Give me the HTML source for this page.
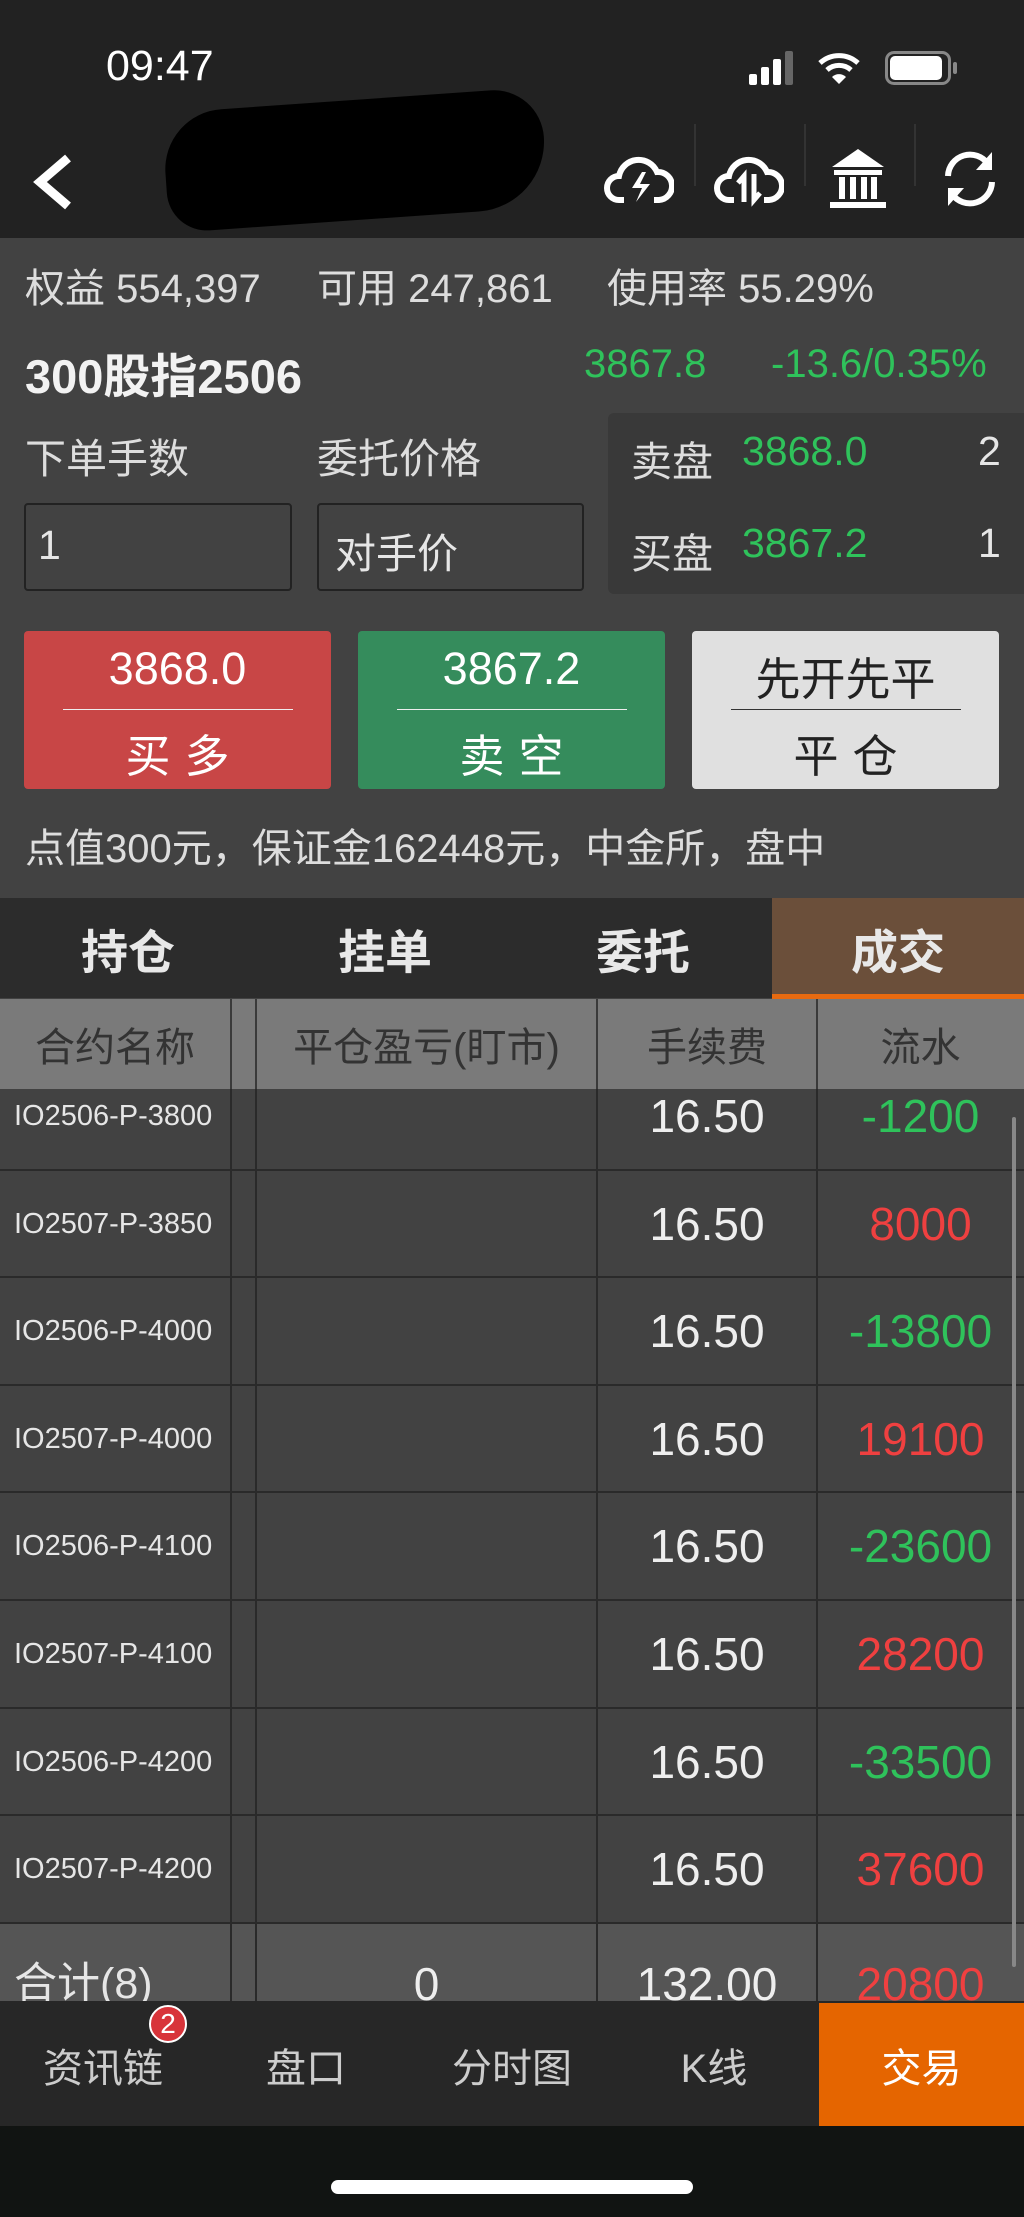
<!DOCTYPE html>
<html><head><meta charset="utf-8"><style>
*{margin:0;padding:0;box-sizing:border-box}
body{width:1024px;height:2217px;background:#424242;font-family:"Liberation Sans","Noto Sans CJK SC",sans-serif;position:relative;overflow:hidden;color:#e6e6e6}
.a{position:absolute;white-space:nowrap}
.g{color:#2fc25b}.r{color:#ef4040}
</style></head><body>
<div class="a" style="left:0;top:0;width:1024px;height:238px;background:#222"></div>
<div class="a" style="left:106px;top:42px;font-size:43px;color:#fff;font-weight:500">09:47</div>
<div class="a" style="left:749px;top:74px;width:8px;height:11px;background:#fff;border-radius:2px"></div>
<div class="a" style="left:761px;top:67px;width:8px;height:18px;background:#fff;border-radius:2px"></div>
<div class="a" style="left:773px;top:59px;width:8px;height:26px;background:#fff;border-radius:2px"></div>
<div class="a" style="left:785px;top:51px;width:8px;height:34px;background:#666;border-radius:2px"></div>
<svg class="a" style="left:817px;top:50px" width="44" height="36" viewBox="0 0 44 36"><path d="M3 13a28 28 0 0 1 38 0" stroke="#fff" stroke-width="5" fill="none"/><path d="M10 20a18 18 0 0 1 24 0" stroke="#fff" stroke-width="5" fill="none"/><path d="M22 34l-7-7a10 10 0 0 1 14 0z" fill="#fff"/></svg>
<div class="a" style="left:885px;top:51px;width:66px;height:34px;border:3px solid #888;border-radius:9px"></div>
<div class="a" style="left:890px;top:56px;width:52px;height:24px;background:#fff;border-radius:5px"></div>
<div class="a" style="left:953px;top:62px;width:4px;height:12px;background:#888;border-radius:2px"></div>
<svg class="a" style="left:28px;top:152px" width="50" height="60" viewBox="0 0 50 60"><path d="M40 6L12 30l28 24" stroke="#fff" stroke-width="9" fill="none"/></svg>
<div class="a" style="left:165px;top:100px;width:380px;height:120px;background:#000;border-radius:60px 50px 70px 40px;transform:rotate(-4deg)"></div>
<svg class="a" style="left:604px;top:150px" width="70" height="60" viewBox="0 0 70 60"><path d="M20 50H15a12 12 0 0 1 0-24 20 20 0 0 1 38-4 12 12 0 0 1 2 28h-5" stroke="#fff" stroke-width="6" fill="none"/><path d="M38 22l-10 16h10l-6 14 14-18H36l6-12z" fill="#fff"/></svg>
<div class="a" style="left:694px;top:124px;width:2px;height:62px;background:#333"></div>
<svg class="a" style="left:714px;top:150px" width="70" height="60" viewBox="0 0 70 60"><path d="M20 50H15a12 12 0 0 1 0-24 20 20 0 0 1 38-4 12 12 0 0 1 2 28h-5" stroke="#fff" stroke-width="6" fill="none"/><path d="M30 52V26l-6 7M40 24v26l6-7" stroke="#fff" stroke-width="5" fill="none"/></svg>
<div class="a" style="left:804px;top:124px;width:2px;height:62px;background:#333"></div>
<svg class="a" style="left:828px;top:145px" width="60" height="66" viewBox="0 0 60 66"><path d="M30 4L4 22h52z" fill="#fff"/><rect x="6" y="25" width="48" height="5" fill="#fff"/><rect x="11" y="32" width="6" height="22" fill="#fff"/><rect x="22" y="32" width="6" height="22" fill="#fff"/><rect x="33" y="32" width="6" height="22" fill="#fff"/><rect x="43" y="32" width="6" height="22" fill="#fff"/><rect x="2" y="57" width="56" height="6" fill="#fff"/></svg>
<div class="a" style="left:914px;top:124px;width:2px;height:62px;background:#333"></div>
<svg class="a" style="left:940px;top:148px" width="60" height="62" viewBox="0 0 60 62"><path d="M8 28a22 22 0 0 1 40-12" stroke="#fff" stroke-width="6" fill="none"/><path d="M52 4v18H36z" fill="#fff"/><path d="M52 34a22 22 0 0 1-40 12" stroke="#fff" stroke-width="6" fill="none"/><path d="M8 58V40h16z" fill="#fff"/></svg>
<div class="a" style="left:25px;top:256px;font-size:40px;color:#ddd">权益 554,397</div>
<div class="a" style="left:317px;top:256px;font-size:40px;color:#ddd">可用 247,861</div>
<div class="a" style="left:607px;top:256px;font-size:40px;color:#ddd">使用率 55.29%</div>
<div class="a" style="left:25px;top:338px;font-size:47px;font-weight:bold;color:#f2f2f2">300股指2506</div>
<div class="a g" style="left:584px;top:342px;font-size:40px">3867.8</div>
<div class="a g" style="left:771px;top:342px;font-size:40px">-13.6/0.35%</div>
<div class="a" style="left:25px;top:425px;font-size:41px;color:#ddd">下单手数</div>
<div class="a" style="left:317px;top:425px;font-size:41px;color:#ddd">委托价格</div>
<div class="a" style="left:24px;top:503px;width:268px;height:88px;border:2px solid #222;border-radius:4px;background:#424242"></div>
<div class="a" style="left:38px;top:522px;font-size:41px">1</div>
<div class="a" style="left:317px;top:503px;width:267px;height:88px;border:2px solid #222;border-radius:4px;background:#424242"></div>
<div class="a" style="left:335px;top:520px;font-size:41px">对手价</div>
<div class="a" style="left:608px;top:413px;width:416px;height:181px;background:#393939;border-radius:6px 0 0 6px"></div>
<div class="a" style="left:631px;top:428px;font-size:41px;color:#ddd">卖盘</div>
<div class="a g" style="left:742px;top:428px;font-size:41px">3868.0</div>
<div class="a" style="left:978px;top:428px;font-size:41px">2</div>
<div class="a" style="left:631px;top:520px;font-size:41px;color:#ddd">买盘</div>
<div class="a g" style="left:742px;top:520px;font-size:41px">3867.2</div>
<div class="a" style="left:978px;top:520px;font-size:41px">1</div>
<div class="a" style="left:24px;top:631px;width:307px;height:158px;background:#c84646;border-radius:4px"></div>
<div class="a" style="left:358px;top:631px;width:307px;height:158px;background:#358c5c;border-radius:4px"></div>
<div class="a" style="left:692px;top:631px;width:307px;height:158px;background:#e0e0e0;border-radius:4px"></div>
<div class="a" style="left:63px;top:709px;width:230px;height:1px;background:#eee"></div>
<div class="a" style="left:397px;top:709px;width:230px;height:1px;background:#eee"></div>
<div class="a" style="left:731px;top:709px;width:230px;height:1px;background:#333"></div>
<div class="a" style="left:24px;width:307px;top:643px;text-align:center;font-size:45px;color:#fff">3868.0</div>
<div class="a" style="left:358px;width:307px;top:643px;text-align:center;font-size:45px;color:#fff">3867.2</div>
<div class="a" style="left:692px;width:307px;top:643px;text-align:center;font-size:45px;color:#222">先开先平</div>
<div class="a" style="left:24px;width:307px;top:720px;text-align:center;font-size:45px;color:#fff;letter-spacing:14px;text-indent:14px">买多</div>
<div class="a" style="left:358px;width:307px;top:720px;text-align:center;font-size:45px;color:#fff;letter-spacing:14px;text-indent:14px">卖空</div>
<div class="a" style="left:692px;width:307px;top:720px;text-align:center;font-size:45px;color:#222;letter-spacing:14px;text-indent:14px">平仓</div>
<div class="a" style="left:25px;top:816px;font-size:40px;color:#ddd">点值300元，保证金162448元，中金所，盘中</div>
<div class="a" style="left:0;top:898px;width:1024px;height:100px;background:#2c2c2c"></div>
<div class="a" style="left:772px;top:898px;width:252px;height:96px;background:#6b4f3a"></div>
<div class="a" style="left:772px;top:994px;width:252px;height:5px;background:#e86a10"></div>
<div class="a" style="left:0;width:256px;top:914px;text-align:center;font-size:47px;font-weight:bold;color:#e8e8e8">持仓</div>
<div class="a" style="left:256px;width:258px;top:914px;text-align:center;font-size:47px;font-weight:bold;color:#e8e8e8">挂单</div>
<div class="a" style="left:514px;width:258px;top:914px;text-align:center;font-size:47px;font-weight:bold;color:#e8e8e8">委托</div>
<div class="a" style="left:772px;width:252px;top:914px;text-align:center;font-size:47px;font-weight:bold;color:#e8e8e8">成交</div>
<div class="a" style="left:0;top:999px;width:1024px;height:90px;background:#7a7a7a"></div>
<div class="a" style="left:0;width:230px;top:1015px;text-align:center;font-size:40px;color:#333">合约名称</div>
<div class="a" style="left:256px;width:341px;top:1015px;text-align:center;font-size:40px;color:#333">平仓盈亏(盯市)</div>
<div class="a" style="left:597px;width:220px;top:1015px;text-align:center;font-size:40px;color:#333">手续费</div>
<div class="a" style="left:817px;width:207px;top:1015px;text-align:center;font-size:40px;color:#333">流水</div>
<div class="a" style="left:0;top:1089px;width:1024px;height:912px;overflow:hidden">
<div style="position:absolute;left:0;top:-26px;width:1024px">
<style>
.row{position:relative;height:107.6px;border-bottom:2px solid #2a2a2a;background:#424242}
.row div{position:absolute;top:0;height:107.6px;line-height:106px;text-align:center}
.n{left:0;width:230px;font-size:29px;color:#e6e6e6;text-align:left!important;padding-left:14px}
.f{left:597px;width:220px;font-size:46px;color:#eee}
.v{left:817px;width:207px;font-size:46px}
.t{line-height:80px!important;padding-top:20px;height:110px!important}
</style>
<div class="row"><div class="n">IO2506-P-3800</div><div class="f">16.50</div><div class="v g">-1200</div></div>
<div class="row"><div class="n">IO2507-P-3850</div><div class="f">16.50</div><div class="v r">8000</div></div>
<div class="row"><div class="n">IO2506-P-4000</div><div class="f">16.50</div><div class="v g">-13800</div></div>
<div class="row"><div class="n">IO2507-P-4000</div><div class="f">16.50</div><div class="v r">19100</div></div>
<div class="row"><div class="n">IO2506-P-4100</div><div class="f">16.50</div><div class="v g">-23600</div></div>
<div class="row"><div class="n">IO2507-P-4100</div><div class="f">16.50</div><div class="v r">28200</div></div>
<div class="row"><div class="n">IO2506-P-4200</div><div class="f">16.50</div><div class="v g">-33500</div></div>
<div class="row"><div class="n">IO2507-P-4200</div><div class="f">16.50</div><div class="v r">37600</div></div>
<div class="row" style="background:#555;border:none"><div class="n t" style="font-size:43px">合计(8)</div><div class="t" style="left:256px;width:341px;font-size:46px;color:#eee">0</div><div class="f t">132.00</div><div class="v r t">20800</div></div>
</div>
<div class="a" style="left:230px;top:0;width:2px;height:912px;background:#2a2a2a"></div>
<div class="a" style="left:255px;top:0;width:2px;height:912px;background:#2a2a2a"></div>
<div class="a" style="left:596px;top:0;width:2px;height:912px;background:#2a2a2a"></div>
<div class="a" style="left:816px;top:0;width:2px;height:912px;background:#2a2a2a"></div>
<div class="a" style="left:1012px;top:28px;width:4px;height:850px;background:#888;border-radius:2px"></div>
</div>
<div class="a" style="left:230px;top:999px;width:2px;height:90px;background:#3a3a3a"></div>
<div class="a" style="left:255px;top:999px;width:2px;height:90px;background:#3a3a3a"></div>
<div class="a" style="left:596px;top:999px;width:2px;height:90px;background:#3a3a3a"></div>
<div class="a" style="left:816px;top:999px;width:2px;height:90px;background:#3a3a3a"></div>
<div class="a" style="left:0;top:2001px;width:1024px;height:125px;background:#272727"></div>
<div class="a" style="left:819px;top:2003px;width:205px;height:123px;background:#e56500"></div>
<div class="a" style="left:0;width:206px;top:2036px;text-align:center;font-size:40px;color:#ccc">资讯链</div>
<div class="a" style="left:206px;width:200px;top:2036px;text-align:center;font-size:40px;color:#ccc">盘口</div>
<div class="a" style="left:410px;width:204px;top:2036px;text-align:center;font-size:40px;color:#ccc">分时图</div>
<div class="a" style="left:614px;width:200px;top:2036px;text-align:center;font-size:40px;color:#ccc">K线</div>
<div class="a" style="left:819px;width:205px;top:2036px;text-align:center;font-size:40px;color:#fff">交易</div>
<div class="a" style="left:149px;top:2005px;width:38px;height:38px;border-radius:50%;background:#d8343a;border:2px solid #fff;color:#fff;font-size:28px;text-align:center;line-height:34px">2</div>
<div class="a" style="left:0;top:2126px;width:1024px;height:91px;background:#111412"></div>
<div class="a" style="left:331px;top:2180px;width:362px;height:14px;background:#fff;border-radius:7px"></div>
</body></html>
